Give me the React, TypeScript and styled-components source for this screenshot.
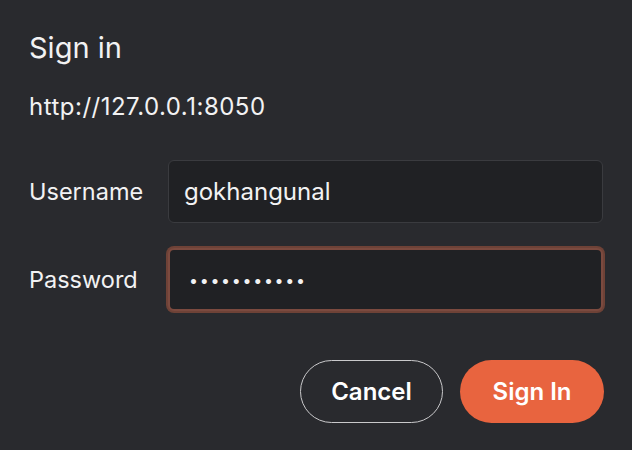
import React from "react";
import styled, { createGlobalStyle } from "styled-components";

const Global = createGlobalStyle`
  html, body { margin: 0; padding: 0; background: #292a2e; }
  body { font-family: Inter, "Noto Sans", "Liberation Sans", sans-serif; color: #f2f2f3; }
  * { box-sizing: border-box; }
`;

const Dialog = styled.div`
  width: 632px;
  height: 450px;
  padding: 30px 28px 0 29px;
  display: flex;
  flex-direction: column;
`;

const Title = styled.h1`
  margin: 0;
  font-size: 29px;
  line-height: 36px;
  font-weight: 400;
`;

const Origin = styled.div`
  margin-top: 27px;
  font-size: 24px;
  line-height: 28px;
  letter-spacing: 0.5px;
`;

const Form = styled.div`
  margin-top: 39px;
  display: grid;
  grid-template-columns: 139px 435px;
  row-gap: 25px;
  align-items: center;
`;

const Label = styled.label`
  font-size: 23.5px;
  line-height: 30px;
`;

const Field = styled.input<{ $focused?: boolean }>`
  height: 63px;
  width: 435px;
  border-radius: 6px;
  background: #202124;
  color: #f2f2f3;
  font-family: inherit;
  font-size: ${(p) => (p.$focused ? "16px" : "24px")};
  border: ${(p) => (p.$focused ? "2px solid #7b4a3f" : "1px solid #3a3b3f")};
  box-shadow: ${(p) => (p.$focused ? "0 0 0 2px #6e4237" : "none")};
  padding: 0 0 0 ${(p) => (p.$focused ? "19px" : "15px")};
  outline: none;
  letter-spacing: ${(p) => (p.$focused ? "1.7px" : "0")};
`;

const Actions = styled.div`
  margin-top: 49px;
  display: flex;
  justify-content: flex-end;
  gap: 17px;
`;

const Button = styled.button<{ $primary?: boolean }>`
  height: 63px;
  width: ${(p) => (p.$primary ? "144px" : "143px")};
  border-radius: 32px;
  font-family: inherit;
  font-size: 24px;
  font-weight: 600;
  color: #ffffff;
  background: ${(p) => (p.$primary ? "#e8643f" : "transparent")};
  border: ${(p) => (p.$primary ? "none" : "1px solid #c9c9cb")};
  cursor: pointer;
`;

export default function App() {
  return (
    <>
      <Global />
      <Dialog>
        <Title>Sign in</Title>
        <Origin>http://127.0.0.1:8050</Origin>
        <Form>
          <Label>Username</Label>
          <Field type="text" defaultValue="gokhangunal" />
          <Label>Password</Label>
          <Field type="password" defaultValue="abcdefghijk" $focused />
        </Form>
        <Actions>
          <Button>Cancel</Button>
          <Button $primary>Sign In</Button>
        </Actions>
      </Dialog>
    </>
  );
}
